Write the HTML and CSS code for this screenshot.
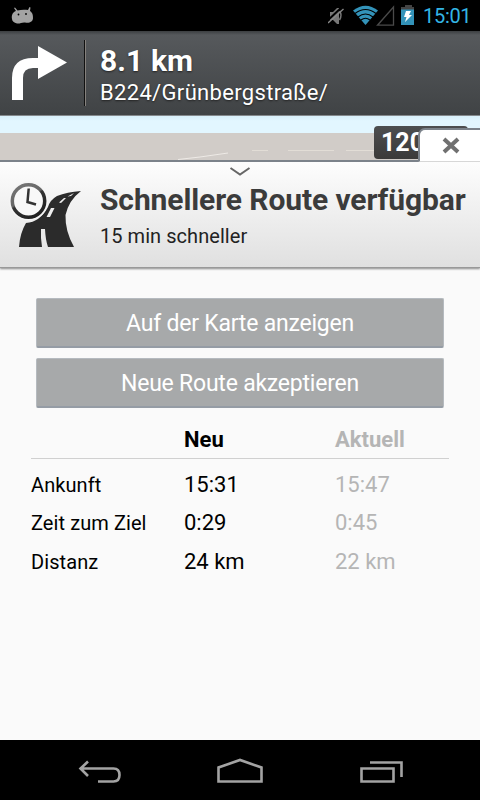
FILE: index.html
```
<!DOCTYPE html>
<html lang="de">
<head>
    <meta charset="UTF-8">
    <title>Schnellere Route</title>
    <link rel="stylesheet" href="styles.css">
</head>
<body>
<div class="phone">

    <!-- Statusleiste -->
    <div class="statusbar">
        <svg class="status-left" width="24" height="20" viewBox="0 0 24 20">
            <path fill="#a3a3a3" d="M1 12 C0 7 3 4.500 5 4 L3 1 L4 .5 L6.500 3.500 C10 2.500 14 2.500 17 3 L18.500 0 L19.500 .5 L19 4 C22 6 22 9 22 11 C22 15 18 16.500 14 15.500 C11 15 9 17 6 16.500 C3 16 1 14 1 12Z"/>
            <circle cx="7.500" cy="7.500" r=".9"/>
            <circle cx="15" cy="7" r=".9"/>
        </svg>
        <svg class="status-icons" width="90" height="24" viewBox="0 0 90 24">
            <!-- stumm -->
            <path fill="#777" d="M2 9h3l4-4h2v16H9l-4-4H2z"/>
            <path fill="none" stroke="#777" stroke-width="1.500" d="M11.500 8q3 4 0 9"/>
            <path stroke="#000" stroke-width="2" d="M-1 18L14 4"/>
            <path stroke="#888" stroke-width="1.300" d="M0 20L15.500 6"/>
            <!-- wlan -->
            <path fill="#3393b9" d="M25 7.500Q37.500-2 50 7.500L37.500 22z"/>
            <path fill="none" stroke="#000" stroke-width="1.100" d="M27 10.500Q37.500 2.500 48 10.500M30 14Q37.500 8 45 14M33 17Q37.500 13.500 42 17"/>
            <!-- netz -->
            <path fill="none" stroke="#4a4a4a" stroke-width="1.300" d="M65.500 4v18.200H49.500z"/>
            <!-- akku -->
            <path fill="#444" d="M77 2h7v2h2v3H73V4h4z"/>
            <path fill="#3393b9" d="M73 6.500h13V22H73z"/>
            <path fill="#fff" d="M78 8h5l-2 4h3l-7 7 1.500-5H76z"/>
        </svg>
        <span class="clock">15:01</span>
    </div>

    <!-- naechstes Manoever -->
    <div class="maneuver">
        <svg class="turn" width="84" height="84" viewBox="0 0 84 84">
            <path fill="#fff" d="M12 69V47Q12 27 33 27H38V15L67 31.500L38 48V37H33Q23 37 23 47V69z"/>
        </svg>
        <div class="divider"></div>
        <div class="maneuver-text">
            <div class="distance">8.1 km</div>
            <div class="street">B224/Grünbergstraße/</div>
        </div>
    </div>

    <!-- Kartenausschnitt -->
    <div class="map">
        <svg class="map-lines" width="480" height="44" viewBox="0 0 480 44">
            <path fill="none" stroke="#eeeae6" d="M178 43.500L200 41L228 37"/>
            <path fill="none" stroke="#e2ddd6" d="M252 34.500H268M288 34.500H334M346 34.500H374"/>
        </svg>
        <div class="speed">120</div>
        <div class="close-tab">
            <svg width="18" height="18" viewBox="0 0 18 18">
                <path stroke="#707070" stroke-width="4" d="M2 2L16 15M16 2L2 15"/>
            </svg>
        </div>
    </div>

    <!-- Meldung -->
    <div class="notice">
        <svg class="chevron" width="24" height="12" viewBox="0 0 24 12">
            <path fill="none" stroke="#666" stroke-width="2" d="M2.500 2L12 8.500L21.500 2"/>
        </svg>
        <svg class="route-icon" width="90" height="105" viewBox="0 0 90 105">
            <defs>
                <linearGradient id="ring" x1="0" y1="0" x2=".6" y2="1">
                    <stop offset="0" stop-color="#777"/>
                    <stop offset=".5" stop-color="#666"/>
                    <stop offset=".55" stop-color="#333"/>
                    <stop offset="1" stop-color="#222"/>
                </linearGradient>
            </defs>
            <path fill="#2b2b2b" d="M19 85Q20 71 26 61Q40 60 48 45Q50 38 57 34Q67 30 81 29Q69 38 65.500 53Q65 69 74 85H48Q45.500 78 45 67H41Q40.500 76 42 85z"/>
            <path fill="#eee" d="M51 46L54.500 46L50 55L46.500 55zM59 40.500L64 36L66 36L61 41zM67.500 34.500L74 31L71 34z"/>
            <circle cx="28.500" cy="39" r="19.500" fill="#f5f5f5"/>
            <circle cx="28.500" cy="39" r="16.200" fill="#f8f8f8" stroke="url(#ring)" stroke-width="3.500"/>
            <path fill="none" stroke="#333" stroke-width="2.500" d="M28.700 26.500L27.500 40L36 42.500"/>
        </svg>
        <div class="notice-text">
            <div class="title">Schnellere Route verfügbar</div>
            <div class="subtitle">15 min schneller</div>
        </div>
    </div>

    <!-- Inhalt -->
    <div class="content">
        <button class="btn">Auf der Karte anzeigen</button>
        <button class="btn">Neue Route akzeptieren</button>

        <div class="compare">
            <div class="row head">
                <span></span><span>Neu</span><span class="old">Aktuell</span>
            </div>
            <div class="row">
                <span class="label">Ankunft</span><span>15:31</span><span class="old">15:47</span>
            </div>
            <div class="row">
                <span class="label">Zeit zum Ziel</span><span>0:29</span><span class="old">0:45</span>
            </div>
            <div class="row">
                <span class="label">Distanz</span><span>24 km</span><span class="old">22 km</span>
            </div>
        </div>
    </div>

    <!-- Android Navigation -->
    <div class="navbar">
        <svg width="160" height="60" viewBox="0 0 160 60">
            <path fill="none" stroke="#a3a3a3" stroke-width="2.600" d="M88 21.500L80.500 28.500L88 36M81 28.500H113.500Q119.500 28.500 119.500 35T113.500 41.500H98"/>
        </svg>
        <svg width="160" height="60" viewBox="0 0 160 60">
            <path fill="none" stroke="#a3a3a3" stroke-width="2.600" d="M58.500 41.500V27.500L80 20L101.500 27.500V41.500z"/>
        </svg>
        <svg width="160" height="60" viewBox="0 0 160 60">
            <path fill="none" stroke="#a3a3a3" stroke-width="2.600" d="M41.500 28.500H73.500V41.500H41.500zM50 22.500H81.500V37"/>
        </svg>
    </div>

</div>
</body>
</html>
```
FILE: styles.css
```
body {
    margin: 0;
    font-family: Roboto, "Liberation Sans", sans-serif;
}
svg {
    display: block;
}
.phone {
    display: flex;
    flex-direction: column;
    width: 480px;
    height: 800px;
    background: #fafafa;
    overflow: hidden;
    white-space: nowrap;
}

/* Statusleiste */
.statusbar {
    display: flex;
    align-items: flex-start;
    height: 31px;
    background: #000;
}
.status-left {
    margin: 7px 0 0 11px;
}
.status-icons {
    margin: 3px 0 0 293px;
}
.clock {
    margin-left: 5px;
    font-size: 20px;
    line-height: 32px;
    color: #33b5e5;
    letter-spacing: -0.3px;
}

/* Abbiegehinweis */
.maneuver {
    display: flex;
    box-sizing: border-box;
    height: 85px;
    background: linear-gradient(#3c3f41 0, #56595c 4px, #404345 100%);
    border-bottom: 1px solid #85898c;
    color: #fff;
    text-shadow: 0 1px 2px #222;
}
.divider {
    width: 1px;
    height: 66px;
    margin-top: 9px;
    background: #111;
    border-right: 1px solid #85817d;
}
.maneuver-text {
    padding: 12px 0 0 14px;
}
.distance {
    font-size: 30px;
    font-weight: bold;
    line-height: 36px;
    letter-spacing: 0.1px;
}
.street {
    font-size: 22px;
    line-height: 28px;
    letter-spacing: 0.33px;
}

/* Karte */
.map {
    position: relative;
    box-sizing: border-box;
    height: 46px;
    background: linear-gradient(#d8f0fa, #e2f6ff 5px, #e2f6ff 17px, #d1ccc8 17px);
    border-bottom: 2px solid #7b828a;
}
.speed {
    position: absolute;
    top: 10px;
    left: 374px;
    box-sizing: border-box;
    width: 94px;
    height: 33px;
    padding-left: 7px;
    border-radius: 4px;
    background: linear-gradient(#4d4e50, #3b3a39);
    color: #fff;
    font-size: 25px;
    font-weight: bold;
    line-height: 33px;
}
.close-tab {
    position: absolute;
    top: 12px;
    right: -3px;
    display: flex;
    box-sizing: border-box;
    width: 65px;
    height: 34px;
    padding: 7px 0 0 22px;
    background: #fff;
    border: 2px solid #7b828a;
    border-bottom: 1px solid #ddd;
    border-radius: 7px 0 0 0;
}

/* Meldung */
.notice {
    position: relative;
    display: flex;
    height: 105px;
    background: linear-gradient(#fdfdfd, #e0e0e0);
    border-bottom: 1px solid #999;
    box-shadow: 0 1px 2px #888;
}
.chevron {
    position: absolute;
    top: 4px;
    left: 228px;
}
.route-icon {
    width: 90px;
}
.notice-text {
    padding: 19px 0 0 10px;
}
.title {
    color: #3b3b3b;
    font-size: 30px;
    font-weight: bold;
    line-height: 37px;
    letter-spacing: -0.1px;
}
.subtitle {
    margin-top: 5px;
    color: #222;
    font-size: 20px;
    line-height: 26px;
    letter-spacing: 0.05px;
}

/* Inhalt */
.content {
    flex: 1;
    padding: 30px 31px 0;
}
.btn {
    display: block;
    box-sizing: border-box;
    width: 408px;
    height: 50px;
    margin: 0 0 10px 5px;
    padding: 2px 0 0;
    border: 1px solid #b5babf;
    border-bottom: 2px solid #959ca5;
    border-radius: 2px;
    background: #a7a9aa;
    color: #fff;
    font-family: inherit;
    font-size: 23px;
    line-height: 45px;
    letter-spacing: -0.22px;
}
.compare {
    padding-top: 7px;
}
.row {
    display: grid;
    grid-template-columns: 153px 151px 1fr;
    height: 38.4px;
    color: #000;
    font-size: 22px;
    line-height: 38px;
}
.head {
    height: 33px;
    margin-bottom: 7px;
    border-bottom: 1px solid #d0d0d0;
    font-weight: bold;
    line-height: 29px;
}
.label {
    font-size: 20px;
    letter-spacing: 0.08px;
}
.old {
    color: #b5b5b5;
}

/* Systemtasten */
.navbar {
    display: flex;
    height: 60px;
    background: #000;
}
```
